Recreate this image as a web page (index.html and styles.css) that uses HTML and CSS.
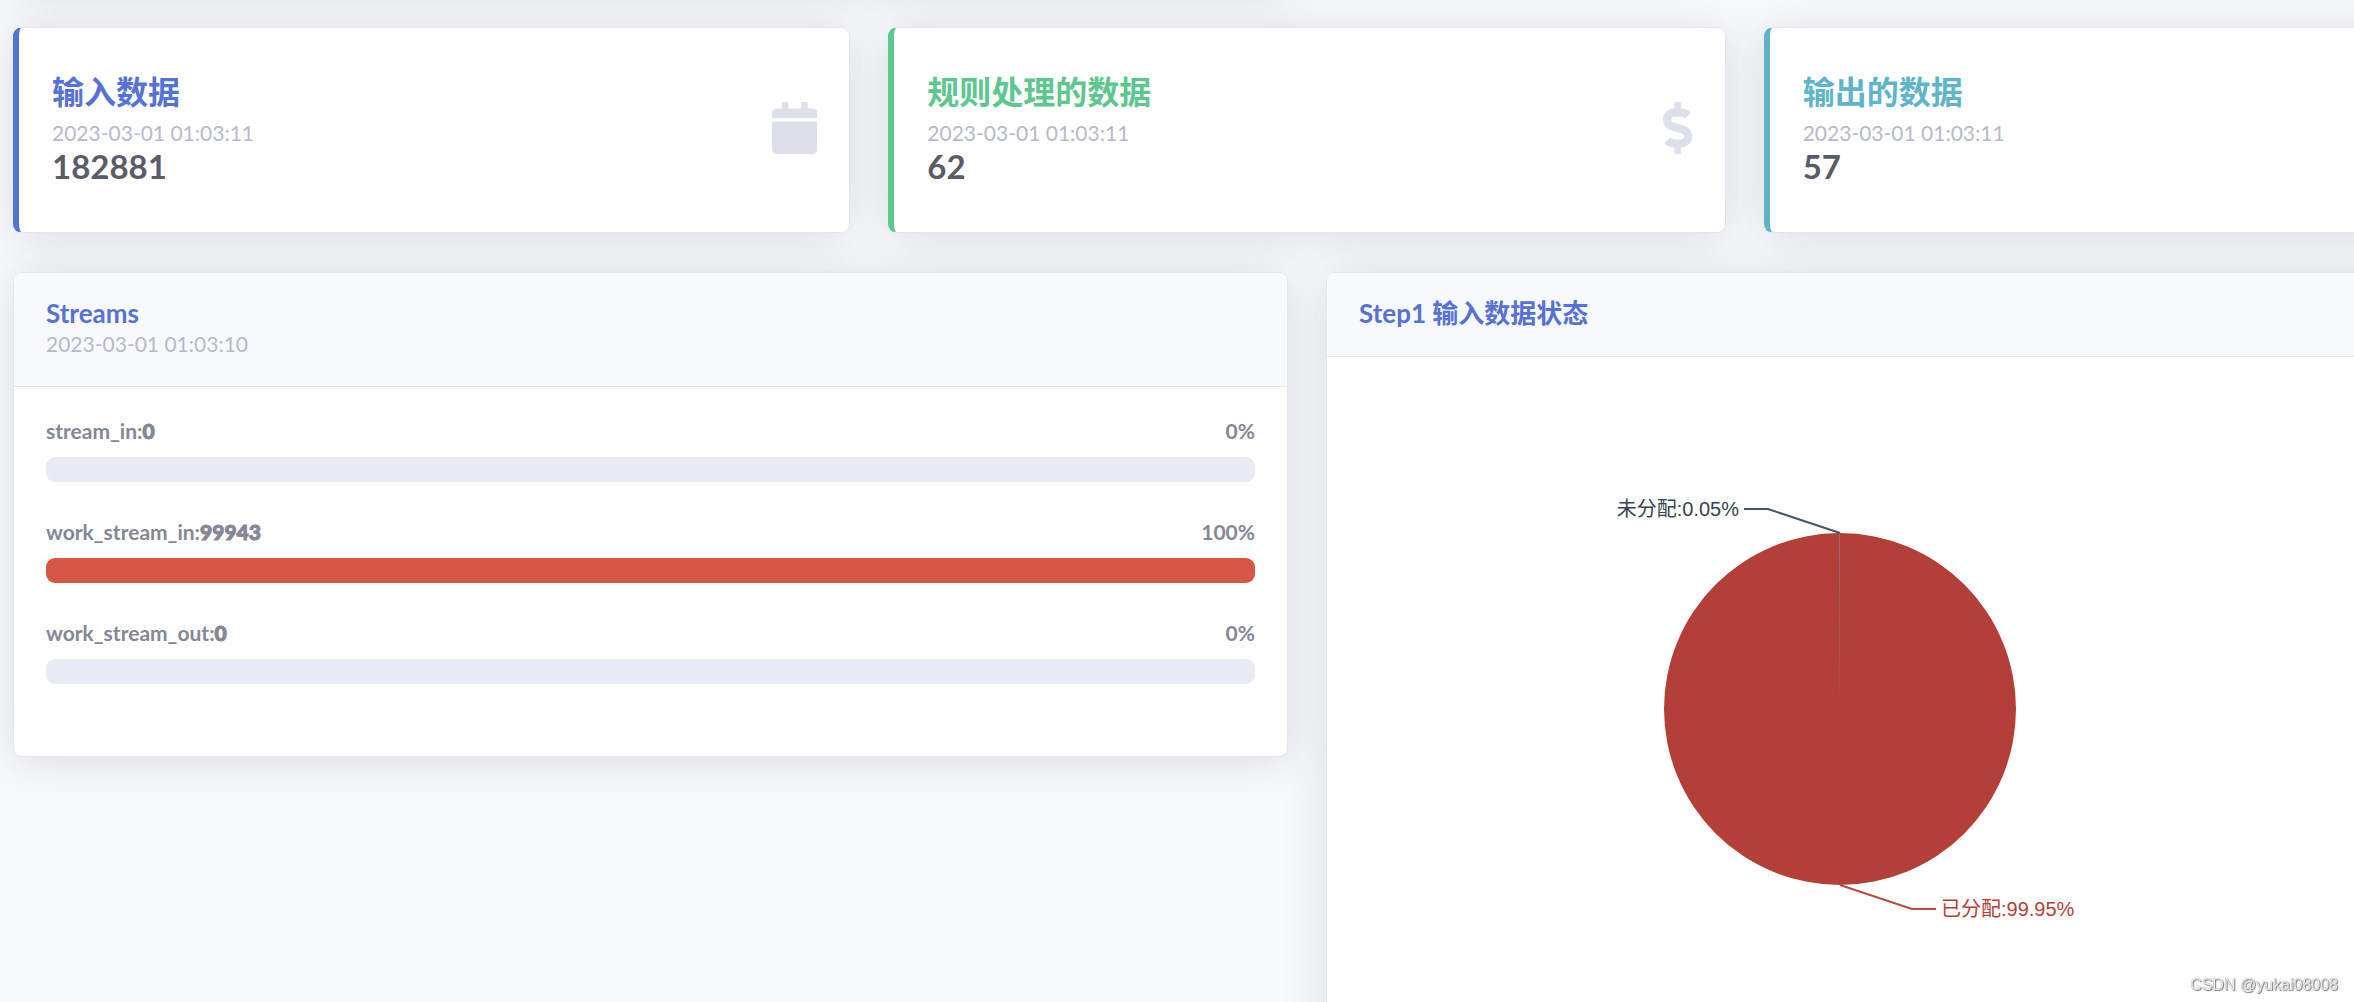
FILE: index.html
```html
<!DOCTYPE html>
<html lang="zh-CN">
<head>
<meta charset="utf-8">
<title>Streams</title>
<link rel="stylesheet" href="styles.css">
</head>
<body>
<main class="dashboard">
  <div class="previous-row"><div class="card"></div></div>

  <section class="stats">
    <article class="card stat stat-primary">
      <div>
        <h2 class="stat-title">输入数据</h2>
        <div class="time">2023-03-01 01:03:11</div>
        <div class="stat-value">182881</div>
      </div>
      <svg class="icon" viewBox="0 0 448 512" aria-hidden="true"><path d="M12 192h424c6.600 0 12 5.400 12 12v260c0 26.500-21.500 48-48 48H48c-26.500 0-48-21.500-48-48V204c0-6.600 5.400-12 12-12zm436-44v-36c0-26.500-21.500-48-48-48h-48V12c0-6.600-5.400-12-12-12h-40c-6.600 0-12 5.400-12 12v52H160V12c0-6.600-5.400-12-12-12h-40c-6.600 0-12 5.400-12 12v52H48C21.500 64 0 85.500 0 112v36c0 6.600 5.400 12 12 12h424c6.600 0 12-5.400 12-12z"/></svg>
    </article>
    <article class="card stat stat-success">
      <div>
        <h2 class="stat-title">规则处理的数据</h2>
        <div class="time">2023-03-01 01:03:11</div>
        <div class="stat-value">62</div>
      </div>
      <svg class="icon" viewBox="0 0 288 512" aria-hidden="true"><path d="M209.200 233.400l-108-31.600C88.700 198.200 80 186.500 80 173.500c0-16.300 13.200-29.500 29.500-29.500h66.300c12.200 0 24.200 3.700 34.200 10.500 6.100 4.100 14.300 3.100 19.500-2l34.800-34c7.100-6.900 6.100-18.400-1.800-24.500C238 74.800 207.400 64.100 176 64V16c0-8.800-7.200-16-16-16h-32c-8.800 0-16 7.200-16 16v48h-2.500C45.800 64-5.400 118.700.5 183.600c4.200 46.100 39.400 83.600 83.800 96.600l102.500 30c12.500 3.700 21.200 15.300 21.200 28.300 0 16.300-13.200 29.500-29.500 29.500h-66.300C100 368 88 364.300 78 357.500c-6.100-4.100-14.300-3.100-19.500 2l-34.800 34c-7.100 6.900-6.100 18.400 1.800 24.500 24.500 19.200 55.100 29.900 86.500 30v48c0 8.800 7.200 16 16 16h32c8.800 0 16-7.200 16-16v-48.200c46.600-.9 90.300-28.600 105.700-72.700 21.500-61.600-14.600-124.800-72.500-141.700z"/></svg>
    </article>
    <article class="card stat stat-info">
      <div>
        <h2 class="stat-title">输出的数据</h2>
        <div class="time">2023-03-01 01:03:11</div>
        <div class="stat-value">57</div>
      </div>
    </article>
  </section>

  <section class="panels">
    <article class="card">
      <header class="card-header">
        <h2 class="card-title">Streams</h2>
        <div class="time">2023-03-01 01:03:10</div>
      </header>
      <div class="streams">
        <div class="stream">
          <h3 class="stream-label"><span>stream_in:<b>0</b></span><span>0%</span></h3>
          <div class="progress"><div class="progress-bar" style="width: 0%"></div></div>
        </div>
        <div class="stream">
          <h3 class="stream-label"><span>work_stream_in:<b>99943</b></span><span>100%</span></h3>
          <div class="progress"><div class="progress-bar" style="width: 100%"></div></div>
        </div>
        <div class="stream">
          <h3 class="stream-label"><span>work_stream_out:<b>0</b></span><span>0%</span></h3>
          <div class="progress"><div class="progress-bar" style="width: 0%"></div></div>
        </div>
      </div>
    </article>

    <article class="card">
      <header class="card-header">
        <h2 class="card-title">Step1 输入数据状态</h2>
      </header>
      <div class="chart-body">
        <svg class="chart" viewBox="0 0 962 640" role="img" aria-label="Step1 输入数据状态">
          <defs>
            <linearGradient id="slice" gradientUnits="userSpaceOnUse" x1="0" y1="144" x2="0" y2="320">
              <stop offset="0" stop-color="#8f7371"/>
              <stop offset="1" stop-color="#b34038"/>
            </linearGradient>
          </defs>
          <circle class="pie" cx="481" cy="320" r="176"/>
          <rect x="480" y="144" width="1" height="176" fill="url(#slice)"/>
          <polyline class="leader leader-free" points="385,120 409,120 481,144"/>
          <polyline class="leader leader-used" points="481,496 553,520 577,520"/>
          <text class="label label-free" x="380" y="127">未分配:0.05%</text>
          <text class="label label-used" x="582" y="527">已分配:99.95%</text>
        </svg>
      </div>
    </article>
  </section>
</main>
<div class="watermark">CSDN @yukai08008</div>
</body>
</html>
```
FILE: styles.css
```css
* {
  box-sizing: border-box;
}

html {
  height: 100%;
  overflow: hidden;
}

body {
  margin: 0;
  background: #f8f9fc;
  color: #858796;
  font-family: Lato, "Noto Sans CJK SC", sans-serif;
  font-size: 21px;
  line-height: 30px;
}

h2,
h3 {
  margin: 0;
}

/* The dashboard runs past the right edge of the window. */
.dashboard {
  display: flex;
  flex-direction: column;
  gap: 39px;
  margin: -112px -247px 0 13px;
}

.previous-row,
.panels {
  display: grid;
  grid-template-columns: 1fr 1fr;
  align-items: start;
  gap: 38px;
}

.previous-row .card {
  height: 100px;
}

.stats {
  display: grid;
  grid-template-columns: repeat(3, 1fr);
  gap: 38px;
}

.card {
  background: #fff;
  border: 1px solid #e3e6f0;
  border-radius: 9px;
  box-shadow: 0 4px 45px rgba(58, 59, 69, 0.15);
}

.stat {
  display: flex;
  align-items: center;
  justify-content: space-between;
  min-height: 206px;
  padding: 40px 32px 44px 33px;
  border-left-width: 6px;
}

.stat-primary {
  border-left-color: #5671d8;
  color: #5671d8;
}

.stat-success {
  border-left-color: #5ec68f;
  color: #5ec68f;
}

.stat-info {
  border-left-color: #60b4ca;
  color: #60b4ca;
}

.stat-title {
  margin-bottom: 7px;
  font-size: 32px;
  line-height: 38px;
}

.stat-value {
  color: #5a5c69;
  font-size: 33px;
  font-weight: 700;
  line-height: 36px;
}

.time {
  color: #b7b9cc;
}

.icon {
  height: 52px;
  fill: #dddfeb;
}

.card-header {
  padding: 24px 32px 27px;
  background: #f8f9fc;
  border-bottom: 1px solid #e3e6f0;
  border-radius: 8px 8px 0 0;
}

.card-title {
  color: #5671d8;
  font-size: 26px;
  line-height: 32px;
}

.streams {
  display: grid;
  gap: 35px;
  padding: 29px 32px 72px;
}

.stream {
  display: grid;
  gap: 11px;
}

.stream-label {
  display: flex;
  justify-content: space-between;
  font-size: 21px;
  font-weight: 700;
}

.stream-label b {
  font-weight: 900;
  -webkit-text-stroke: 1px currentColor;
}

.progress {
  height: 25px;
  overflow: hidden;
  background: #e8ebf3;
  border-radius: 9px;
}

.progress-bar {
  height: 100%;
  background: #d65745;
}

.chart-body {
  padding: 32px;
}

.chart {
  display: block;
  width: 962px;
  max-width: 100%;
}

.pie {
  fill: #b34038;
}

.leader {
  fill: none;
  stroke-width: 2;
}

.leader-free {
  stroke: #44566a;
}

.leader-used {
  stroke: #b94a42;
}

.label {
  font-family: "Liberation Sans", "Noto Sans CJK SC", sans-serif;
  font-size: 20px;
}

.label-free {
  fill: #354351;
  text-anchor: end;
}

.label-used {
  fill: #b34038;
}

.watermark {
  position: fixed;
  right: 16px;
  bottom: 2px;
  color: #e8e8e8;
  font-family: "Liberation Sans", sans-serif;
  font-size: 16px;
  text-shadow: 1px 1px 1px #777, 0 0 1px #999;
}
```
